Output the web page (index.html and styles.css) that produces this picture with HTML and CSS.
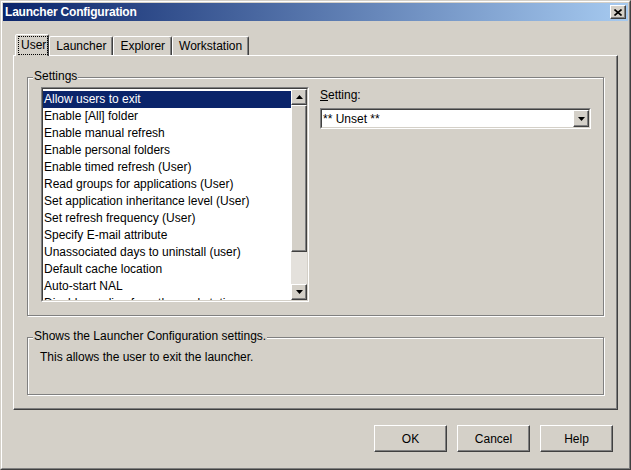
FILE: index.html
```html
<!DOCTYPE html>
<html>
<head>
<meta charset="utf-8">
<title>Launcher Configuration</title>
<link rel="stylesheet" href="styles.css">
</head>
<body>
<div class="window">
  <div class="window-inner">
    <div class="titlebar">
      <span class="title">Launcher Configuration</span>
      <div class="close-btn raised">
        <svg width="8" height="7" viewBox="0 0 8 7"><path d="M0.5 0.5 L7.5 6.5 M7.5 0.5 L0.5 6.5" stroke="#000" stroke-width="1.6" fill="none"/></svg>
      </div>
    </div>
    <div class="content">
      <div class="tabs">
        <div class="tab selected"><span class="focus">User</span></div>
        <div class="tab">Launcher</div>
        <div class="tab">Explorer</div>
        <div class="tab">Workstation</div>
      </div>
      <div class="panel">
        <div class="group settings-group">
          <span class="group-label">Settings</span>
          <div class="listbox">
            <div class="listbox-inner">
              <ul class="list">
                <li class="sel">Allow users to exit</li>
                <li>Enable [All] folder</li>
                <li>Enable manual refresh</li>
                <li>Enable personal folders</li>
                <li>Enable timed refresh (User)</li>
                <li>Read groups for applications (User)</li>
                <li>Set application inheritance level (User)</li>
                <li>Set refresh frequency (User)</li>
                <li>Specify E-mail attribute</li>
                <li>Unassociated days to uninstall (user)</li>
                <li>Default cache location</li>
                <li>Auto-start NAL</li>
                <li>Disable reading from the workstation</li>
              </ul>
              <div class="vscroll">
                <div class="sb-btn raised">
                  <svg width="7" height="4" viewBox="0 0 7 4"><polygon points="0,4 7,4 3.5,0" fill="#000"/></svg>
                </div>
                <div class="sb-thumb raised"></div>
                <div class="sb-track"></div>
                <div class="sb-btn raised">
                  <svg width="7" height="4" viewBox="0 0 7 4"><polygon points="0,0 7,0 3.5,4" fill="#000"/></svg>
                </div>
              </div>
            </div>
          </div>
          <div class="setting-col">
            <label class="setting-label"><u>S</u>etting:</label>
            <div class="combo">
              <div class="combo-inner">
                <span class="combo-text">** Unset **</span>
                <div class="combo-btn raised">
                  <svg width="7" height="4" viewBox="0 0 7 4"><polygon points="0,0 7,0 3.5,4" fill="#000"/></svg>
                </div>
              </div>
            </div>
          </div>
        </div>
        <div class="group desc-group">
          <span class="group-label">Shows the Launcher Configuration settings.</span>
          <p class="desc-text">This allows the user to exit the launcher.</p>
        </div>
      </div>
      <div class="buttons">
        <div class="btn raised">OK</div>
        <div class="btn raised">Cancel</div>
        <div class="btn raised">Help</div>
      </div>
    </div>
  </div>
</div>
</body>
</html>
```
FILE: styles.css
```css
html, body {
  margin: 0;
  padding: 0;
  background: #d4d0c8;
}
body {
  font-family: "Liberation Sans", Arial, sans-serif;
  font-size: 12px;
  color: #000;
}
.window {
  width: 631px;
  height: 470px;
  box-sizing: border-box;
  border: 1px solid;
  border-color: #d4d0c8 #404040 #404040 #d4d0c8;
}
.window-inner {
  height: 100%;
  box-sizing: border-box;
  border: 1px solid;
  border-color: #fff #808080 #808080 #fff;
  padding: 1px;
  display: flex;
  flex-direction: column;
}
.raised {
  background: #d4d0c8;
  box-sizing: border-box;
  border: 1px solid;
  border-color: #fff #404040 #404040 #fff;
  box-shadow: inset -1px -1px 0 #808080;
}
.titlebar {
  height: 18px;
  flex: none;
  background: linear-gradient(to right, #0a246a, #a6caf0);
  display: flex;
  align-items: center;
  justify-content: space-between;
  padding: 0 2px;
}
.title {
  color: #fff;
  font-weight: bold;
  font-size: 12px;
  letter-spacing: -0.2px;
}
.close-btn {
  width: 16px;
  height: 14px;
  display: flex;
  align-items: center;
  justify-content: center;
}
.content {
  flex: 1;
  display: flex;
  flex-direction: column;
  padding: 0 10px;
}
.tabs {
  display: flex;
  align-items: flex-end;
  height: 21px;
  margin-top: 13px;
  padding-left: 2px;
  position: relative;
  z-index: 1;
}
.tab {
  height: 19px;
  box-sizing: border-box;
  padding: 0 6px;
  border: 1px solid;
  border-bottom: none;
  border-color: #fff #404040 transparent #fff;
  box-shadow: inset -1px 0 0 #808080;
  border-radius: 2px 2px 0 0;
  line-height: 18px;
  background: #d4d0c8;
}
.tab.selected {
  height: 22px;
  margin-bottom: -1px;
  padding: 2px 1px 0 3px;
  line-height: 16px;
}
.focus {
  display: block;
  outline: 1px dotted #000;
  padding: 0 1px 1px 2px;
  line-height: 16px;
}
.panel {
  height: 355px;
  box-sizing: border-box;
  border: 1px solid;
  border-color: #fff #404040 #404040 #fff;
  box-shadow: inset -1px -1px 0 #808080;
  padding: 21px 13px 0 13px;
  display: flex;
  flex-direction: column;
  gap: 21px;
}
.group {
  position: relative;
  border: 1px solid #808080;
  box-shadow: inset 1px 1px 0 #fff, 1px 1px 0 #fff;
  box-sizing: border-box;
}
.group-label {
  position: absolute;
  top: -9px;
  left: 5px;
  padding: 0 1px;
  background: #d4d0c8;
  line-height: 15px;
  white-space: nowrap;
}
.settings-group {
  height: 239px;
  padding: 9px 12px 0 13px;
  display: flex;
  gap: 11px;
}
.listbox {
  width: 268px;
  height: 215px;
  box-sizing: border-box;
  border: 1px solid;
  border-color: #808080 #fff #fff #808080;
  display: flex;
  flex: none;
}
.listbox-inner {
  flex: 1;
  display: flex;
  border: 1px solid;
  border-color: #404040 #d4d0c8 #d4d0c8 #404040;
  background: #fff;
  overflow: hidden;
}
.list {
  flex: 1;
  margin: 0;
  padding: 2px 0 0 0;
  list-style: none;
  overflow: hidden;
}
.list li {
  height: 17px;
  line-height: 17px;
  padding-left: 1px;
  white-space: nowrap;
}
.list li.sel {
  background: #0a246a;
  color: #fff;
}
.vscroll {
  width: 16px;
  flex: none;
  display: flex;
  flex-direction: column;
  background: #e4e1dc;
}
.sb-btn {
  height: 16px;
  flex: none;
  display: flex;
  align-items: center;
  justify-content: center;
}
.sb-thumb {
  height: 147px;
  flex: none;
}
.sb-track {
  flex: 1;
}
.setting-col {
  flex: 1;
  display: flex;
  flex-direction: column;
}
.setting-label {
  height: 17px;
  line-height: 17px;
  margin-bottom: 4px;
}
.combo {
  height: 21px;
  box-sizing: border-box;
  border: 1px solid;
  border-color: #808080 #fff #fff #808080;
  display: flex;
}
.combo-inner {
  flex: 1;
  display: flex;
  align-items: center;
  border: 1px solid;
  border-color: #404040 #d4d0c8 #d4d0c8 #404040;
  background: #fff;
}
.combo-text {
  flex: 1;
  padding-left: 1px;
}
.combo-btn {
  width: 16px;
  height: 17px;
  display: flex;
  align-items: center;
  justify-content: center;
}
.desc-group {
  height: 58px;
  padding: 11px 12px 0 12px;
}
.desc-text {
  margin: 0;
  line-height: 16px;
}
.buttons {
  display: flex;
  justify-content: flex-end;
  gap: 10px;
  margin-top: 15px;
  padding-right: 5px;
}
.btn {
  width: 73px;
  height: 27px;
  display: flex;
  align-items: center;
  justify-content: center;
}
```
